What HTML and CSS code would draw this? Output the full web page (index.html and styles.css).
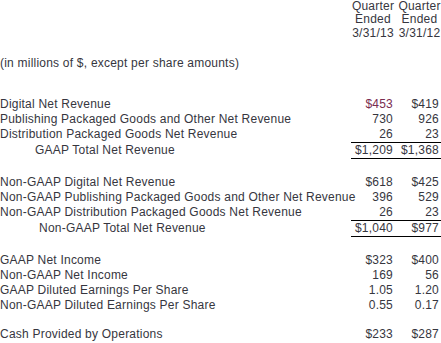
FILE: index.html
```html
<!DOCTYPE html>
<html>
<head>
<meta charset="utf-8">
<link rel="stylesheet" href="styles.css">
</head>
<body>
<div class="sheet">
  <div class="head">
    <div class="row hrow first"><span></span><span class="hc">Quarter</span><span class="hc hc2">Quarter</span></div>
    <div class="row hrow"><span></span><span class="hc">Ended</span><span class="hc hc2">Ended</span></div>
    <div class="row hrow"><span></span><span class="hc">3/31/13</span><span class="hc hc2">3/31/12</span></div>
  </div>

  <div class="row note"><span class="lbl">(in millions of $, except per share amounts)</span><span></span><span></span></div>

  <div class="group g1">
    <div class="row"><span class="lbl">Digital Net Revenue</span><span class="v accent">$453</span><span class="v">$419</span></div>
    <div class="row"><span class="lbl">Publishing Packaged Goods and Other Net Revenue</span><span class="v">730</span><span class="v">926</span></div>
    <div class="row"><span class="lbl">Distribution Packaged Goods Net Revenue</span><span class="v">26</span><span class="v">23</span></div>
    <div class="row total"><span class="lbl ind1">GAAP Total Net Revenue</span><span class="v">$1,209</span><span class="v">$1,368</span></div>
  </div>

  <div class="group g2">
    <div class="row"><span class="lbl">Non-GAAP Digital Net Revenue</span><span class="v">$618</span><span class="v">$425</span></div>
    <div class="row"><span class="lbl">Non-GAAP Publishing Packaged Goods and Other Net Revenue</span><span class="v">396</span><span class="v">529</span></div>
    <div class="row"><span class="lbl">Non-GAAP Distribution Packaged Goods Net Revenue</span><span class="v">26</span><span class="v">23</span></div>
    <div class="row total"><span class="lbl ind2">Non-GAAP Total Net Revenue</span><span class="v">$1,040</span><span class="v">$977</span></div>
  </div>

  <div class="group g3">
    <div class="row"><span class="lbl">GAAP Net Income</span><span class="v">$323</span><span class="v">$400</span></div>
    <div class="row"><span class="lbl">Non-GAAP Net Income</span><span class="v">169</span><span class="v">56</span></div>
    <div class="row"><span class="lbl">GAAP Diluted Earnings Per Share</span><span class="v">1.05</span><span class="v">1.20</span></div>
    <div class="row"><span class="lbl">Non-GAAP Diluted Earnings Per Share</span><span class="v">0.55</span><span class="v">0.17</span></div>
  </div>

  <div class="group g4">
    <div class="row"><span class="lbl">Cash Provided by Operations</span><span class="v">$233</span><span class="v">$287</span></div>
  </div>
</div>
</body>
</html>
```

FILE: styles.css
```css
html, body {
  margin: 0;
  padding: 0;
  background: #ffffff;
}

body {
  font-family: "Liberation Sans", Arial, sans-serif;
  font-size: 12px;
  letter-spacing: 0.22px;
  color: #36363e;
  overflow: hidden;
}

.sheet {
  width: 441px;
}

.row {
  display: grid;
  grid-template-columns: 351px 44px 46px;
  height: 15px;
  line-height: 15px;
  white-space: nowrap;
}

.hrow {
  height: 14px;
  line-height: 14px;
}

.hrow.first {
  height: 12px;
  line-height: 12px;
}

.hc {
  text-align: center;
}

.hc2 {
  padding-left: 3px;
}

.note {
  margin-top: 16px;
}

.v {
  text-align: right;
  padding-right: 2px;
}

.accent {
  color: #7a2c50;
}

.g1 {
  margin-top: 26px;
}

.g2 {
  margin-top: 16px;
}

.g3 {
  margin-top: 16px;
}

.g4 {
  margin-top: 14px;
}

.total {
  height: 17px;
}

.total .v {
  border-top: 1px solid #000;
  border-bottom: 1px solid #000;
}

.ind1 {
  padding-left: 35px;
  padding-top: 1px;
}

.ind2 {
  padding-left: 39px;
  padding-top: 1px;
}
```
